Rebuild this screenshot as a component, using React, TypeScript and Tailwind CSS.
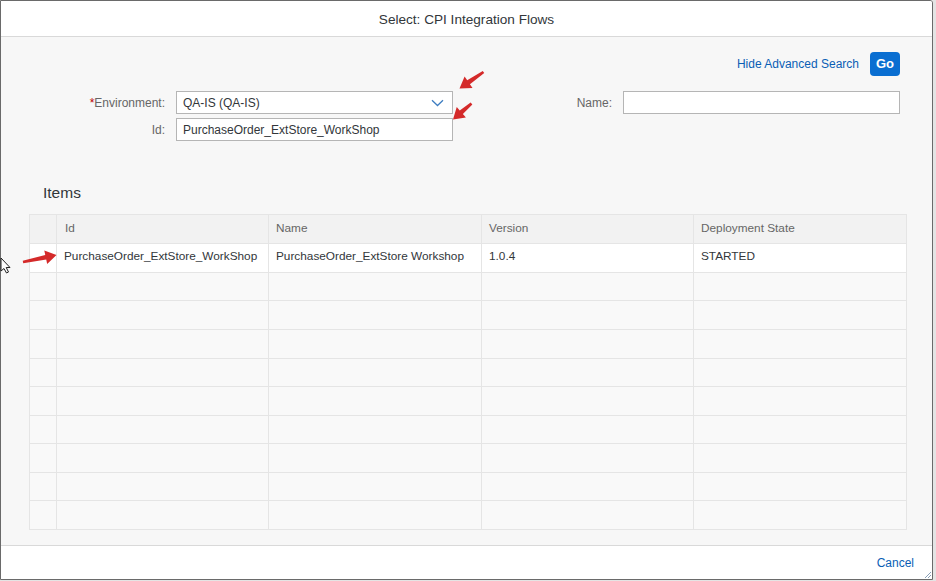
import React from "react";

const font = { fontFamily: '"Liberation Sans", Arial, sans-serif' };

function Arrow({ tx, ty, hx, hy }: { tx: number; ty: number; hx: number; hy: number }) {
  const dx = hx - tx;
  const dy = hy - ty;
  const len = Math.sqrt(dx * dx + dy * dy);
  const ux = dx / len;
  const uy = dy / len;
  const px = -uy;
  const py = ux;
  const headLen = 11;
  const headW = 7;
  const shaftW0 = 1.3;
  const shaftW1 = 2.4;
  const bx = hx - ux * headLen;
  const by = hy - uy * headLen;
  const pts = [
    [tx + px * shaftW0, ty + py * shaftW0],
    [bx + px * shaftW1, by + py * shaftW1],
    [bx + px * headW, by + py * headW],
    [hx, hy],
    [bx - px * headW, by - py * headW],
    [bx - px * shaftW1, by - py * shaftW1],
    [tx - px * shaftW0, ty - py * shaftW0],
  ]
    .map((p) => p.join(","))
    .join(" ");
  return <polygon points={pts} fill="#d42a2a" />;
}

const rowHeights = [29, 28, 29, 29, 28, 29, 28, 29, 28, 29];

export default function App() {
  return (
    <div className="relative w-[936px] h-[581px] bg-[#e4e4e4] overflow-hidden" style={font}>
      <div className="w-[933px] h-[580px] flex flex-col border border-[#6a6a6a] rounded-tr-[3px] overflow-hidden bg-white">
        {/* Header */}
        <div className="h-[36px] shrink-0 flex items-center justify-center border-b border-[#d9d9d9] bg-white pt-[3px]">
          <span className="text-[13.6px] text-[#32363a]">Select: CPI Integration Flows</span>
        </div>

        {/* Content */}
        <div className="flex-1 bg-[#f7f7f7] flex flex-col">
          <div className="flex items-center justify-end pt-[15px] pr-[32px]">
            <span className="text-[12px] text-[#0a5eb5]">Hide Advanced Search</span>
            <button className="ml-[11px] w-[30px] h-[24px] rounded-[4px] bg-[#0a6ed1] text-white text-[13px] font-bold flex items-center justify-center">
              Go
            </button>
          </div>

          <div className="mt-[15px] flex flex-col gap-[4px]">
            <div className="flex items-center h-[23px]">
              <div className="w-[164px] text-right text-[12px] text-[#666666]">
                <span className="text-[#bb0000]">*</span>Environment:
              </div>
              <div className="ml-[11px] w-[277px] h-[23px] bg-white border border-[#b5b5b5] flex items-center justify-between pl-[6px] pr-[8px]">
                <span className="text-[12px] text-[#32363a]">QA-IS (QA-IS)</span>
                <svg width="13" height="8" viewBox="0 0 13 8">
                  <path d="M1 1.2 L6.5 6.5 L12 1.2" fill="none" stroke="#3f7ec1" strokeWidth="1.3" />
                </svg>
              </div>
              <div className="w-[159px] text-right text-[12px] text-[#666666]">Name:</div>
              <div className="ml-[11px] w-[277px] h-[23px] bg-white border border-[#b5b5b5]" />
            </div>
            <div className="flex items-center h-[23px]">
              <div className="w-[164px] text-right text-[12px] text-[#666666]">Id:</div>
              <div className="ml-[11px] w-[277px] h-[23px] bg-white border border-[#b5b5b5] flex items-center pl-[6px]">
                <span className="text-[12px] text-[#32363a]">PurchaseOrder_ExtStore_WorkShop</span>
              </div>
            </div>
          </div>

          <div className="mt-[41px] h-[22px] pl-[42px] flex items-center text-[15.5px] text-[#32363a]">Items</div>

          <div className="mt-[10px] ml-[28px] w-[878px] border border-[#e5e5e5] border-b-0">
            <div className="grid grid-cols-[26px_212px_213px_212px_1fr] h-[29px] bg-[#f2f2f2] border-b border-[#e5e5e5] text-[11.8px] text-[#666666]">
              <div />
              <div className="border-l border-[#e5e5e5] flex items-center pl-[8px]">Id</div>
              <div className="border-l border-[#e5e5e5] flex items-center pl-[7px]">Name</div>
              <div className="border-l border-[#e5e5e5] flex items-center pl-[7px]">Version</div>
              <div className="border-l border-[#e5e5e5] flex items-center pl-[7px]">Deployment State</div>
            </div>
            {rowHeights.map((h, i) => (
              <div
                key={i}
                className={
                  "grid grid-cols-[26px_212px_213px_212px_1fr] border-b border-[#e5e5e5] text-[11.8px] text-[#32363a] " +
                  (i === 0 ? "bg-white" : "bg-[#f9f9f9]")
                }
                style={{ height: h }}
              >
                <div />
                <div className="border-l border-[#e5e5e5] flex items-center pl-[7px] pb-[2px]">
                  {i === 0 ? "PurchaseOrder_ExtStore_WorkShop" : ""}
                </div>
                <div className="border-l border-[#e5e5e5] flex items-center pl-[7px] pb-[2px]">
                  {i === 0 ? "PurchaseOrder_ExtStore Workshop" : ""}
                </div>
                <div className="border-l border-[#e5e5e5] flex items-center pl-[7px] pb-[2px]">{i === 0 ? "1.0.4" : ""}</div>
                <div className="border-l border-[#e5e5e5] flex items-center pl-[7px] pb-[2px]">{i === 0 ? "STARTED" : ""}</div>
              </div>
            ))}
          </div>
        </div>

        {/* Footer */}
        <div className="h-[34px] shrink-0 bg-white border-t border-[#d9d9d9] flex items-center justify-end pr-[18px]">
          <span className="text-[12px] text-[#0a5eb5]">Cancel</span>
        </div>
      </div>

      {/* Overlays: annotation arrows, cursor, resize grip */}
      <svg className="absolute left-0 top-0 pointer-events-none" width="936" height="581">
        <Arrow tx={483.5} ty={72} hx={459.5} hy={88.5} />
        <Arrow tx={471.5} ty={103.5} hx={453} hy={119.5} />
        <Arrow tx={23} ty={262} hx={56.5} hy={255} />
        <polygon
          points="1,258 1,271 4,268.5 6.5,273 8.5,272 6.2,267.5 10,267.5"
          fill="#ffffff"
          stroke="#222222"
          strokeWidth="1"
          strokeLinejoin="round"
        />
        <path d="M925 578 L931 572 M928 578 L931 575" stroke="#8aa0b8" strokeWidth="1" />
      </svg>
    </div>
  );
}
